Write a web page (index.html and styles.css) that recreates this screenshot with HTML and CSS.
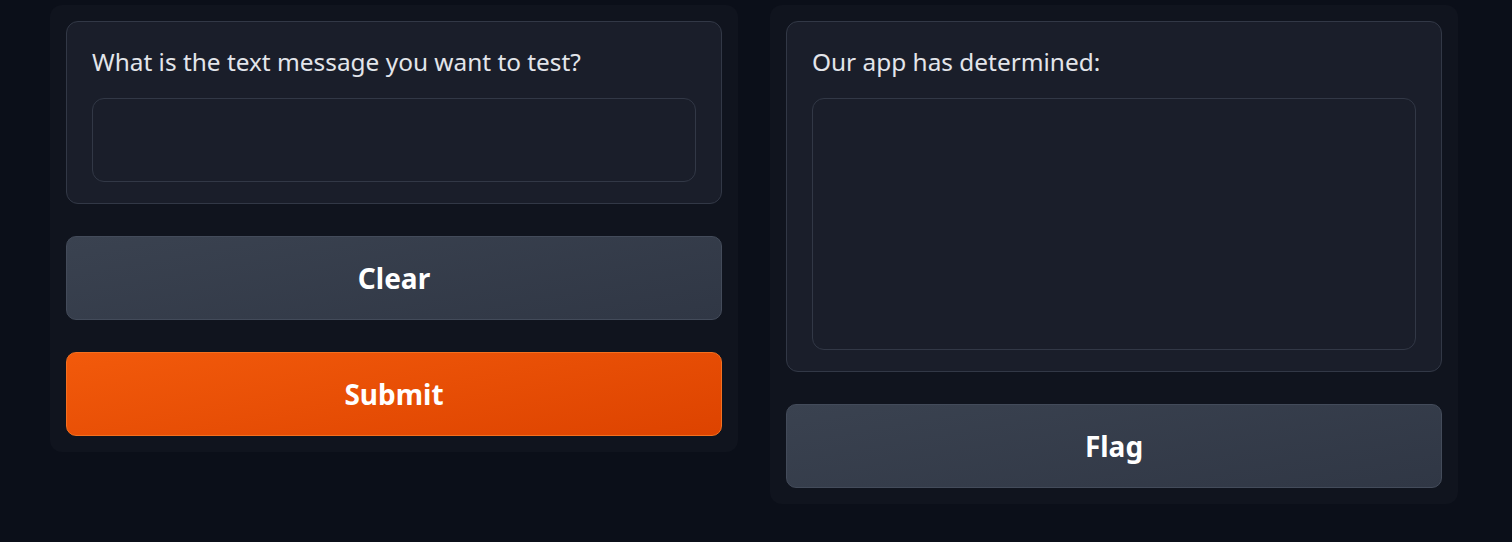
FILE: index.html
```html
<!DOCTYPE html>
<html lang="en">
<head>
<meta charset="utf-8">
<title>Spam test</title>
<link rel="stylesheet" href="styles.css">
</head>
<body>
<div class="row">
  <div class="panel">
    <div class="block">
      <label class="label">What is the text message you want to test?</label>
      <div class="input"></div>
    </div>
    <button class="btn secondary">Clear</button>
    <button class="btn primary">Submit</button>
  </div>
  <div class="panel">
    <div class="block">
      <label class="label">Our app has determined:</label>
      <div class="input output"></div>
    </div>
    <button class="btn secondary">Flag</button>
  </div>
</div>
</body>
</html>
```
FILE: styles.css
```css
html, body {
  margin: 0;
  padding: 0;
  background: #0b0f19;
  height: 100%;
}
body {
  font-family: "Noto Sans", "Open Sans", sans-serif;
  color: #e5e7eb;
}
.row {
  display: flex;
  gap: 32px;
  padding: 5px 54px 0 50px;
  align-items: flex-start;
}
.panel {
  flex: 1;
  background: #10141e;
  border-radius: 12px;
  padding: 16px;
  display: flex;
  flex-direction: column;
  gap: 32px;
}
.block {
  background: #1a1e2a;
  border: 1px solid #323846;
  border-radius: 12px;
  padding: 24px 25px 21px;
  display: flex;
  flex-direction: column;
  gap: 20px;
}
.label {
  font-size: 24.4px;
  line-height: 32px;
  color: #e3e5ea;
}
.input {
  height: 82px;
  background: #1a1e2a;
  border: 1px solid #323846;
  border-radius: 12px;
}
.input.output {
  height: 250px;
}
.btn {
  height: 84px;
  border-radius: 10px;
  font-family: inherit;
  font-weight: 700;
  font-size: 28px;
  color: #ffffff;
  cursor: pointer;
}
.btn.secondary {
  background: linear-gradient(170deg, #3a4250, #303745);
  border: 1px solid #434b5a;
}
.btn.primary {
  background: linear-gradient(170deg, #f25a0b, #dd4300);
  border: 1px solid #f4701f;
}
```
